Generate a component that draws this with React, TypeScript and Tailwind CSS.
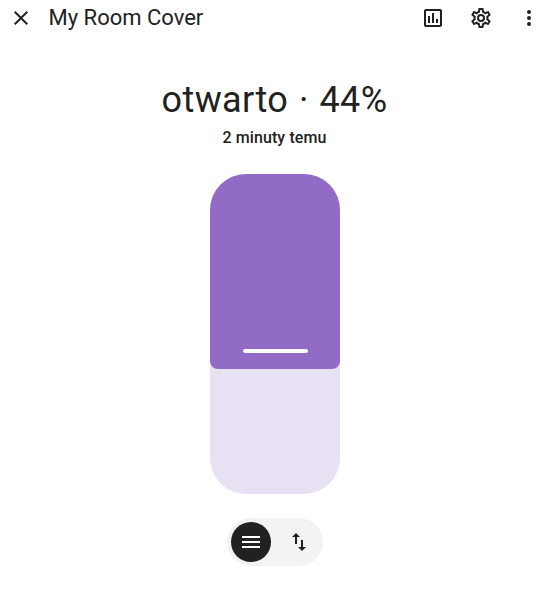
const icons = {
  close:
    'M19,6.41L17.59,5L12,10.59L6.41,5L5,6.41L10.59,12L5,17.59L6.41,19L12,13.41L17.59,19L19,17.59L13.41,12L19,6.41Z',
  chart:
    'M9 17H7V10H9V17M13 17H11V7H13V17M17 17H15V13H17V17M19 19H5V5H19V19.1M19 3H5C3.9 3 3 3.9 3 5V19C3 20.1 3.9 21 5 21H19C20.1 21 21 20.1 21 19V5C21 3.9 20.1 3 19 3Z',
  cog:
    'M12,8A4,4 0 0,1 16,12A4,4 0 0,1 12,16A4,4 0 0,1 8,12A4,4 0 0,1 12,8M12,10A2,2 0 0,0 10,12A2,2 0 0,0 12,14A2,2 0 0,0 14,12A2,2 0 0,0 12,10M10,22C9.75,22 9.54,21.82 9.5,21.58L9.13,18.93C8.5,18.68 7.96,18.34 7.44,17.94L4.95,18.95C4.73,19.03 4.46,18.95 4.34,18.73L2.34,15.27C2.21,15.05 2.27,14.78 2.46,14.63L4.57,12.97L4.5,12L4.57,11L2.46,9.37C2.27,9.22 2.21,8.95 2.34,8.73L4.34,5.27C4.46,5.05 4.73,4.96 4.95,5.05L7.44,6.05C7.96,5.66 8.5,5.32 9.13,5.07L9.5,2.42C9.54,2.18 9.75,2 10,2H14C14.25,2 14.46,2.18 14.5,2.42L14.87,5.07C15.5,5.32 16.04,5.66 16.56,6.05L19.05,5.05C19.27,4.96 19.54,5.05 19.66,5.27L21.66,8.73C21.79,8.95 21.73,9.22 21.54,9.37L19.43,11L19.5,12L19.43,13L21.54,14.63C21.73,14.78 21.79,15.05 21.66,15.27L19.66,18.73C19.54,18.95 19.27,19.04 19.05,18.95L16.56,17.95C16.04,18.34 15.5,18.68 14.87,18.93L14.5,21.58C14.46,21.82 14.25,22 14,22H10M11.25,4L10.88,6.61C9.68,6.86 8.62,7.5 7.85,8.39L5.44,7.35L4.69,8.65L6.8,10.2C6.4,11.37 6.4,12.64 6.8,13.8L4.68,15.36L5.43,16.66L7.86,15.62C8.63,16.5 9.68,17.14 10.87,17.38L11.24,20H12.76L13.13,17.39C14.32,17.14 15.37,16.5 16.14,15.62L18.57,16.66L19.32,15.36L17.2,13.81C17.6,12.64 17.6,11.37 17.2,10.2L19.31,8.65L18.56,7.35L16.15,8.39C15.38,7.5 14.32,6.86 13.12,6.62L12.75,4H11.25Z',
  dots:
    'M12,16A2,2 0 0,1 14,18A2,2 0 0,1 12,20A2,2 0 0,1 10,18A2,2 0 0,1 12,16M12,10A2,2 0 0,1 14,12A2,2 0 0,1 12,14A2,2 0 0,1 10,12A2,2 0 0,1 12,10M12,4A2,2 0 0,1 14,6A2,2 0 0,1 12,8A2,2 0 0,1 10,6A2,2 0 0,1 12,4Z',
  menu: 'M3,6H21V8H3V6M3,11H21V13H3V11M3,16H21V18H3V16Z',
  swap: 'M9,3L5,7H8V14H10V7H13M16,17V10H14V17H11L15,21L19,17H16Z',
}

const Icon = ({ name }: { name: keyof typeof icons }) => (
  <svg viewBox="0 0 24 24" className="size-6 shrink-0 fill-current">
    <path d={icons[name]} />
  </svg>
)

const Header = () => (
  <header className="flex h-9 items-center pl-[9px] pr-[13px]">
    <button aria-label="close">
      <Icon name="close" />
    </button>
    <h1 className="ml-[15.5px] flex-1 text-[22px] leading-7">My Room Cover</h1>
    <div className="flex gap-6">
      <button aria-label="history">
        <Icon name="chart" />
      </button>
      <button aria-label="settings">
        <Icon name="cog" />
      </button>
      <button aria-label="menu">
        <Icon name="dots" />
      </button>
    </div>
  </header>
)

const CoverSlider = () => (
  <div className="mt-6 h-80 w-[130px] overflow-hidden rounded-[36px] bg-[#e8e1f3]">
    <div className="flex h-[195.4px] items-end justify-center rounded-b-lg bg-[#926bc7] pb-4">
      <div className="h-1 w-[65px] rounded-full bg-white" />
    </div>
  </div>
)

const ModeSwitch = () => (
  <div className="mt-6 flex h-12 w-24 items-center gap-2 rounded-full bg-[#f2f4f4] px-1">
    <button
      aria-label="position"
      className="flex size-10 items-center justify-center rounded-full bg-[#212121] text-white"
    >
      <Icon name="menu" />
    </button>
    <button
      aria-label="buttons"
      className="flex size-10 items-center justify-center rounded-full"
    >
      <Icon name="swap" />
    </button>
  </div>
)

const App = () => {
  return (
    <div className="min-h-screen bg-white font-['Roboto',sans-serif] text-[#212121]">
      <Header />
      <main className="flex w-[550px] flex-col items-center pt-[42px]">
        <p className="pr-px text-[36px] leading-[44px] tracking-[0.36px] [word-spacing:1.5px]">
          otwarto · 44%
        </p>
        <p className="mt-1 pr-px text-base font-medium leading-6 tracking-[0.1px]">
          2 minuty temu
        </p>
        <CoverSlider />
        <ModeSwitch />
      </main>
    </div>
  )
}

export default App
